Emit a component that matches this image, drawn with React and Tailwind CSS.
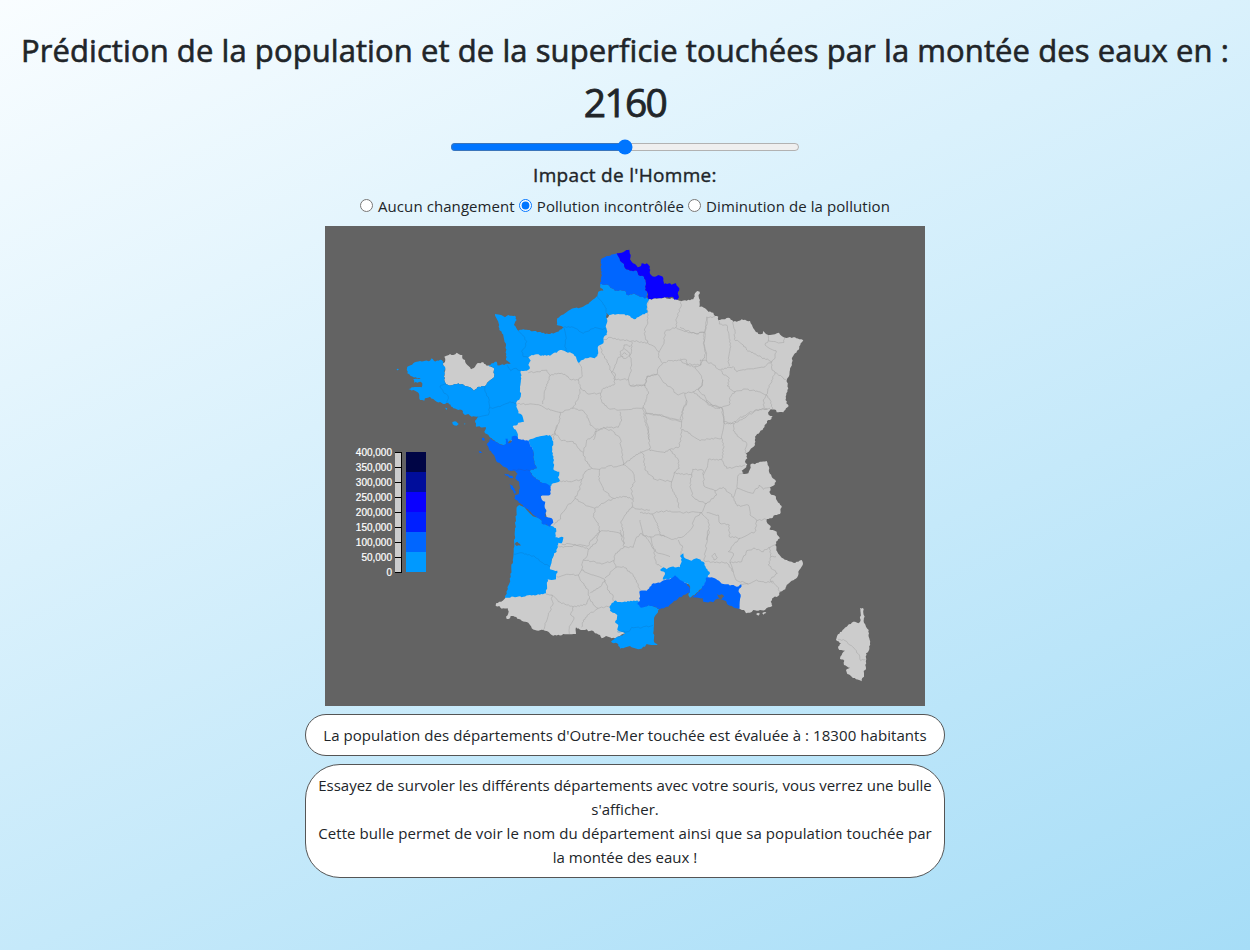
import React from "react";

// Digitised sheets: every trace is recorded in the local frame of its sheet,
// at three units per map pixel.
const SHEETS = {
  A: [390, 300],
  B: [540, 240],
  C: [680, 280],
  D: [470, 420],
  E: [480, 530],
  F: [640, 530],
  G: [640, 400],
  H: [820, 600],
  I: [510, 340],
};

function points(source) {
  let sheet = SHEETS.A;
  const out = [];
  source.trim().split(/\s+/).forEach((token) => {
    if (SHEETS[token]) {
      sheet = SHEETS[token];
      return;
    }
    const [x, y] = token.split(",").map(Number);
    out.push([sheet[0] + x / 3, sheet[1] + y / 3]);
  });
  return out;
}

// Breaks long straight segments into slightly irregular ones. The offset only
// depends on the segment's ends, so that neighbouring areas stay joined.
function roughen(list, closed, amount) {
  const out = [];
  const count = closed ? list.length : list.length - 1;
  for (let i = 0; i < count; i++) {
    const p = list[i];
    const q = list[(i + 1) % list.length];
    out.push(p);
    const length = Math.hypot(q[0] - p[0], q[1] - p[1]);
    const flip = p[0] + p[1] * 0.37 < q[0] + q[1] * 0.37;
    const a = flip ? p : q;
    const b = flip ? q : p;
    const parts = Math.floor(length / 1.5);
    const inner = [];
    for (let k = 1; k < parts; k++) {
      const t = k / parts;
      const noise = Math.sin(a[0] * 12.9 + b[1] * 78.2 + k * 37.7) * 43758.5;
      const offset = (noise - Math.floor(noise) - 0.5) * amount;
      inner.push([
        a[0] + (b[0] - a[0]) * t - ((b[1] - a[1]) / length) * offset,
        a[1] + (b[1] - a[1]) * t + ((b[0] - a[0]) / length) * offset,
      ]);
    }
    out.push(...(flip ? inner : inner.reverse()));
  }
  if (!closed) out.push(list[list.length - 1]);
  return out;
}

function trace(source, closed = true, amount = 1.3) {
  return (
    "M" +
    roughen(points(source), closed, amount)
      .map(([x, y]) => x.toFixed(1) + " " + y.toFixed(1))
      .join("L") +
    (closed ? "Z" : "")
  );
}

const GREY = [
  `B 325,178 345,175 365,175 375,171 385,176 400,176 413,180 425,183 440,182 460,178 465,160 472,153 479,155 476,170 480,180 478,200
   C 60,80 75,85 85,95 100,98 102,105 115,110 115,120 130,118 145,113 160,125 175,123 185,118 200,122 210,123 216,135 220,145 235,162 248,161 250,153 258,162 265,165 285,163 297,158 305,168 315,173 345,172 358,178 370,181 362,190 358,205 345,220 337,232 335,250 330,270 326,290 320,300 325,325 319,340 318,355 319,370 326,378 318,385 310,397 290,397 288,390 272,388 264,398 266,405 278,408 270,420
   G 385,60 370,85 345,110 345,135 330,150 318,160 322,175 315,185 322,193 315,205 305,212 308,221 325,220 330,208 332,192 345,193 355,188 380,183 383,195 388,205 387,215 395,230 408,245 400,257 390,262 390,280 408,290 412,303 425,318 420,342 405,345 395,355 380,357 382,370 392,378 388,388 398,390 410,395 412,405 420,415
   F 408,35 406,45 412,65 425,83 440,90 460,98 475,95 485,90 489,102 482,115 475,125 472,142 455,152 440,165 436,178 420,185 418,195 397,205 392,215 397,228 385,232 375,240 355,242 340,240 335,246 318,250 312,240 300,237 290,225 285,190 200,170 140,160 60,180
   E 440,240 425,300 436,310 420,318 405,325 395,325 378,318 365,325 360,315 345,310 340,303 325,304 320,298 300,299 288,292 288,312 275,313 250,312 245,316 215,315 205,305 190,300 175,302 165,300 155,295 150,285 145,278 125,272 100,258 92,258 90,265 80,267 78,260 85,250 83,235 65,236 58,228 47,228 48,220 68,212 77,200 190,185 195,150 205,115 225,60
   D 245,380 235,300 210,240 230,180 240,100 190,90 120,60 120,10
   A 350,378 350,330 370,250 380,190 430,130
   B 30,320 60,315 85,325 100,340 170,270 230,200`,
  `A 157,190 165,185 163,170 180,162 190,165 200,158 207,163 217,165 217,175 225,180 232,195 243,208 255,200 262,190 280,187 290,197 300,197 312,205 312,232 295,245 285,258 262,262 252,272 245,265 225,258 205,250 185,256 168,252 162,230 165,205`,
  `H 120,24 129,24 130,38 134,50 132,68 138,80 146,90 146,110 150,130 148,148 138,160 139,178 136,195 138,208 131,213 132,225 125,244 108,238 95,230 82,222 78,210 90,203 72,195 73,182 60,177 65,165 75,152 58,150 54,140 64,130 48,120 54,103 65,95 80,80 95,68 105,65 115,70 122,60`,
  `F 348,252 354,248 360,251 355,257`,
  `F 367,249 376,246 379,249 370,254`,
];

const LIGHT = [
  `B 180,133 205,135 215,145 225,152 255,152 262,165 285,162 300,170 318,172 328,178 320,195 322,218 300,228 282,238 270,228 262,225 235,222 205,225 198,218 202,240 197,260 202,275 200,285 192,290 190,310 175,318 175,340 165,355 150,352 135,355 115,368 108,350 95,340 78,335 60,330 50,338 40,340 30,347 5,345
   A 455,168 440,163 425,165 415,172 422,182 415,195 420,205 410,212 392,212 394,235 390,260 392,290 378,310 385,340 396,345 402,365 385,368 382,375 368,378 382,398 384,414 365,420 355,426 345,435 325,430 305,415 290,402 283,395 288,382 258,380 255,362 265,350 245,350 235,342 225,345 215,330 190,325 175,308 165,312 140,305 130,297 120,290 105,295 103,302 90,300 86,280 75,272 55,267 65,262 95,262 97,250 92,245 72,248 70,238 92,237 62,228 52,220 52,200 70,190 90,183 120,182 125,175 132,183 155,180 160,185 158,195 165,200 162,230 168,252 185,256 205,250 225,258 245,265 252,272 262,262 285,258 295,245 312,232 312,205 295,197 305,190 320,185 322,196 362,190 348,180 347,130 335,95 328,90 325,65 315,42 335,46 345,52 355,45 375,47 380,60 372,75 385,92 400,88 475,102 495,98 515,88
   B 70,262 50,255 52,235 65,225 100,205 125,202 145,192 165,175 172,168 175,155 190,152 180,142`,
  `D 175,62 205,50 240,45 250,65 246,95 252,120 250,148 268,155 264,172 270,183 250,190 240,200 215,188 185,165 180,152 200,145 193,130 190,95`,
  `D 140,262 148,255 160,260 185,285 215,300 215,310 245,318 258,325 256,352 280,352
   E 250,25 245,40 235,38 230,65 222,70 215,95 210,118 232,122 228,148 215,150 203,148 198,190 170,195 145,196 130,200 100,200 75,203 90,150 98,90 103,50 104,15
   D 135,330`,
  `F 60,120 70,112 80,118 95,110 120,112 125,85 120,78 130,70 135,85 155,92 170,85 190,95 198,115 210,130 200,145 192,165 175,185 150,203 145,195 150,180 148,165 105,145 68,148 75,128`,
  `E 390,228 403,213 430,216 475,212 480,225 492,232 510,222 538,238 525,258 522,275 521,300 522,335 533,345 500,342 495,350 475,358 450,348 430,355 420,356 415,343 393,335 405,325 436,311 412,300 415,285 406,278 412,255 390,242`,
  `A 187,366 195,364 206,372 200,377 188,373`,
  `A 165,323 172,325 170,330`,
  `A 20,207 25,206 26,210 21,211`,
  `A 222,371 226,370 225,374`,
];

const MEDIUM = [
  `D 50,75 62,55 72,62 85,70 100,76 108,72 106,56 113,56 114,70 125,65 125,50 135,47 150,58 175,62 190,95 193,130 200,145 180,152 185,165 215,188 228,190 242,200 240,225 212,228 216,240 226,245 224,262 229,270 225,290 245,295 250,308 240,320 215,310 212,298 185,280 165,262 150,250 133,235 135,225 146,222 150,205 148,188 135,175 143,162 135,152 120,152 95,135 80,125 75,112 65,98`,
  `D 103,161 115,163 130,172 128,175 108,167`,
  `D 118,191 128,197 138,215 135,222 122,205`,
  `D 35,54 42,53 44,62 37,61`,
  `D 26,94 32,94 36,99 29,99`,
  `B 182,60 200,48 230,40 240,62 252,72 255,85 270,92 290,92 295,105 312,110 318,130 315,150 322,160 318,175 300,170 285,162 262,165 255,152 225,152 215,145 205,135 180,133 184,110`,
  `F 0,183 20,182 40,160 60,158 75,150 90,148 105,136 125,152 148,170 150,188 130,195 100,215 85,230 60,238 45,230 25,226 10,232
   E 480,232 472,222 480,210 478,185`,
  `F 200,142 215,142 232,150 250,162 275,165 290,170 303,163 305,168 296,180 302,200 298,237 280,232 265,225 258,213 230,207 220,217 190,215 188,205 155,203 178,185 192,165`,
];

const DARK = [
  `B 230,40 245,38 255,33 268,29 272,45 270,58 275,65 285,72 293,82 303,78 305,70 315,73 320,70 330,80 329,95 333,105 345,110 355,105 368,110 370,122 372,132 390,130 395,134 408,130 414,140 418,145 413,160 417,172 412,179 403,179 400,172 372,172 345,175 325,178 323,160 315,150 318,130 312,110 295,105 290,92 270,92 255,85 252,72 240,62`,
];

const WATER = [
  `E 104,42 112,35 122,47 110,48`,
  `F 230,193 238,196 245,193 252,200 245,207 236,203`,
];

const LIMITS = [
  // Nord and Île-de-France
  `B 325,178 321,195 322,220 323,245 313,270 316,290 323,308`,
  `B 424,183 420,205 410,235 408,262`,
  `B 408,262 385,270 375,275 372,305 358,335 340,318 323,308`,
  `B 190,298 215,293 245,300 275,303 323,308`,
  `B 408,262 435,275 465,280 492,278`,
  `B 500,230 502,250 492,278 492,310 498,340 488,362 482,375`,
  `B 358,335 355,352 368,370 355,385 350,403`,
  `B 368,370 390,362 415,360 440,372 482,375`,
  `B 180,318 190,345 205,370 215,398 225,375 235,352 250,350`,
  `B 275,305 275,330 270,345 275,375 270,400 265,418`,
  `B 240,335 252,325 262,332 270,340 262,352 250,355 240,345 240,335`,
  `B 245,345 253,338 262,345`,
  `B 250,325 252,315 272,318`,
  `B 215,398 225,418 265,418 268,435 285,438 315,437 320,410 350,403`,
  // North-east
  `C 0,142 20,152 45,160 75,158`,
  `C 75,158 78,135 82,112 105,110`,
  `C 75,158 70,190 78,215 80,243`,
  `C 115,120 118,132 140,135 145,155 150,180 150,210 145,235 148,258`,
  `C 158,125 165,150 163,178 190,195 200,210 235,228 275,245`,
  `C 80,243 100,255 122,270 148,262 160,260 170,275 195,270 225,265 250,262 275,245`,
  `C 265,165 265,182 255,195 272,207 288,212 285,235 275,245`,
  `C 265,182 290,187 312,187 315,173`,
  `C 275,245 275,265 285,278 305,290 320,302`,
  `C 285,278 275,300 268,322 258,345`,
  `C 122,270 132,285 148,295 142,318 165,335`,
  `C 165,335 195,327 235,335 258,345 270,360 278,388`,
  `C 165,335 150,352 148,375 125,383`,
  `C 258,345 250,360 252,383 262,388`,
  `C 125,383 130,405 132,430 155,430 190,408 225,390 262,388`,
  `C 80,243 60,240 62,255 45,260 65,290 68,315 55,328 75,350 85,375 105,385 125,383`,
  `C 0,237 20,240 20,255 45,260`,
  // Centre
  `I 55,98 85,95 110,90 120,107 145,100 165,103 180,118 205,120 217,108 215,85 205,68`,
  `I 120,107 105,150 98,192`,
  `I 18,190 55,193 90,196 120,210 150,217 188,205 205,175 212,145 205,120`,
  `I 212,145 235,162 272,160 280,145 312,135 315,100`,
  `I 315,100 308,95`,
  `I 272,160 275,185 295,205 330,210 365,208 400,203 410,175 415,155 405,137`,
  `I 360,137 405,137 412,108 442,103`,
  `I 442,103 465,130 485,145 500,163 525,160 550,155 570,145 578,120`,
  `I 400,203 410,222 450,225 480,235 512,240 515,215 530,190 525,160`,
  `I 550,155 575,175 595,190 630,207`,
  `I 188,205 220,212 235,235 240,255 258,268 300,262 325,262 335,240 330,215`,
  `I 150,217 148,245 138,262 130,300`,
  `I 258,268 250,300`,
  `I 400,203 403,235 412,265 418,300`,
  // West and Limousin
  `D 240,50 255,40 262,15`,
  `D 255,40 275,62 310,65 325,85 340,98`,
  `D 340,98 350,60 368,50 375,35 400,22 430,35 450,55 455,95 460,135`,
  `D 340,98 345,120 365,145 345,155 335,178`,
  `D 270,183 300,185 335,178 330,205 315,235 290,260 275,280 272,297 250,315`,
  `D 365,145 390,148 415,138 440,140 465,135`,
  `D 390,148 385,170 400,210 430,235`,
  `D 315,235 345,255 375,265 400,250 430,235 465,230 488,238`,
  `D 465,135 490,160 495,185 482,205 490,235 485,262 510,268 540,270`,
  `D 460,135 490,110 520,95 540,85`,
  `D 375,265 370,290 385,310 390,335 360,365 355,378 325,375 280,382 260,378`,
  `D 390,335 415,332 450,340 460,350`,
  `D 485,262 465,285 452,305 460,340 462,372`,
  // South-west
  `E 245,42 285,43 310,50 325,58 320,80 310,90 305,120 295,135 265,133 230,140`,
  `E 325,58 350,35 358,0`,
  `E 420,0 432,50 405,75 402,92`,
  `E 432,50 460,52 468,25 485,10 500,25 515,50 535,70 570,80`,
  `E 310,90 345,95 365,102 402,92 408,112 375,145`,
  `E 305,120 340,135 375,150 362,170 330,190`,
  `E 295,135 305,155 325,180 328,205 320,222 280,230 260,225 235,215 215,195 198,192`,
  `E 215,195 218,225 205,250 195,280 190,300`,
  `E 280,230 272,255 282,262 268,295 268,312`,
  `E 328,205 345,228 355,235 330,250 310,270 305,292`,
  `E 355,235 385,230 395,225`,
  `E 375,150 382,175 400,200 400,213`,
  `E 408,112 430,110 455,130 475,165 480,183`,
  // Massif Central, Rhône
  `G 15,40 60,45 100,60 125,65`,
  `G 125,65 130,30 140,0`,
  `G 125,65 122,85 150,100 180,122 215,115 245,115`,
  `G 15,40 25,90 30,152 75,158 90,148`,
  `G 125,90 118,140 90,148 115,180 118,205 102,218`,
  `G 200,0 215,15 245,22 252,65 245,115`,
  `G 252,65 282,72 310,55 350,30 390,25`,
  `G 282,72 280,92 300,115 320,130 315,158 318,160`,
  `G 245,115 252,140 245,180 260,205 295,200 315,195`,
  `G 245,180 205,178 200,205 190,225 192,258 225,272 250,262`,
  `G 0,155 10,162 15,210 45,238 95,245 102,218 155,225 158,208 188,210 190,225`,
  `G 95,245 95,265 112,300 118,325`,
  `G 155,225 150,250 158,290 175,303 200,310 230,285 225,272`,
  `G 250,262 280,292 292,265 295,225 310,218`,
  `G 292,265 320,275 340,280 358,255 370,268 390,262`,
  `G 280,292 292,318 325,315 330,345 350,362 378,358`,
  `G 0,338 35,342 50,335 90,333 125,338 160,335 185,338 200,310`,
  `G 35,342 52,370 62,405 100,418 125,412 155,385 165,352 185,338`,
  `G 185,338 205,360 208,395 200,420`,
  `G 200,338 235,345 240,370 268,375 268,410 300,415 345,395 350,362`,
  // South-east
  `F 30,20 40,50 48,100 65,110`,
  `F 0,-30 10,15 30,20 60,15 75,20`,
  `F 115,30 128,52 122,75`,
  `F 205,0 200,40 192,92`,
  `F 215,78 225,70 232,82 222,90 215,78`,
  `F 192,92 225,98 260,98 280,125 288,150 325,162`,
  `F 300,25 280,45 265,65 280,70 270,98 280,125`,
  `F 270,98 305,95 320,62 345,55 365,65 390,52 408,45`,
  `F 390,52 392,80 408,80`,
  `F 392,80 385,105 412,130 390,150 398,160`,
  `F 303,163 325,162 350,150 375,158 398,153 412,170 420,188`,
  `H 54,118 75,122 90,135 105,148 118,165 122,182 137,178`,
];

const LIMITS_ON_LIGHT = [
  `B 172,168 185,185 198,205 198,218`,
  `B 70,262 100,262 130,280 165,262 198,268`,
  `B 70,262 78,290 75,315 80,335`,
  `A 385,92 398,105 410,125 405,142 395,155 400,170 415,172`,
  `A 350,195 362,212 375,205 392,212`,
  `A 168,252 150,258 160,275 175,290 170,308`,
  `A 285,258 285,275 298,300 298,325`,
  `A 260,350 295,345 298,325 330,320 360,305 378,310`,
  `E 100,72 125,68 165,80 190,100 210,110`,
  `E 412,305 445,305 455,292 485,293 520,285`,
  `B 318,172 300,170 285,162`,
];

const SCALE = [
  ["400,000", "bg-[#000545]"],
  ["350,000", "bg-[#000d9b]"],
  ["300,000", "bg-[#0a00ff]"],
  ["250,000", "bg-[#001fff]"],
  ["200,000", "bg-[#0066ff]"],
  ["150,000", "bg-[#0099ff]"],
  ["100,000"],
  ["50,000"],
  ["0"],
];

function Areas({ list, fill }) {
  return <path d={list.map((s) => trace(s)).join("")} fill={fill} />;
}

function FranceMap() {
  return (
    <svg className="block h-[480px] w-[600px]" viewBox="325 226 600 480" role="img">
      <Areas list={GREY} fill="#cccccc" />
      <path
        d={LIMITS.map((s) => trace(s, false, 1.6)).join("")}
        fill="none"
        stroke="#a3a3a3"
        strokeWidth="0.5"
      />
      <Areas list={LIGHT} fill="#0099ff" />
      <path
        d={LIMITS_ON_LIGHT.map((s) => trace(s, false, 1.3)).join("")}
        fill="none"
        stroke="#0a80d4"
        strokeWidth="0.5"
      />
      <Areas list={MEDIUM} fill="#0066ff" />
      <path
        d={trace("D 120,152 150,148 180,152", false)}
        fill="none"
        stroke="#1a5bd0"
        strokeWidth="0.5"
      />
      <Areas list={DARK} fill="#0a00ff" />
      <Areas list={WATER} fill="#636363" />
    </svg>
  );
}

function Legend() {
  return (
    <div className="absolute left-[27px] top-[219px] flex font-['Liberation_Sans',Arial,sans-serif] text-[10px] text-white">
      <ul className="w-10 text-right">
        {SCALE.map(([label]) => (
          <li key={label} className="h-[15px] leading-[15px] [-webkit-text-stroke:0.2px_white]">
            {label}
          </li>
        ))}
      </ul>
      <div className="ml-[3px] mt-[7px] h-[121px] w-[7px] border-y border-r border-black bg-[#cccccc]">
        {SCALE.slice(1).map(([label]) => (
          <div key={label} className="h-[15px] border-b border-black last:border-b-0" />
        ))}
      </div>
      <div className="ml-1 mt-[7px] w-5">
        {SCALE.slice(0, 6).map(([label, colour]) => (
          <div key={label} className={`h-5 ${colour}`} />
        ))}
      </div>
    </div>
  );
}

function Choice({ label, checked }) {
  return (
    <label className="flex items-center">
      <input
        type="radio"
        name="impact"
        defaultChecked={checked}
        className="m-0 mb-px mr-[5px] h-[13px] w-[13px]"
      />
      {label}
    </label>
  );
}

export default function App() {
  return (
    <main className="flex h-[950px] w-[1250px] flex-col items-center overflow-hidden bg-[linear-gradient(155deg,#f9fdff_0%,#a6ddf7_100%)] pt-[31px] font-['Open_Sans','Noto_Sans',sans-serif] text-base text-[#212529]">
      <h2 className="h-[38px] whitespace-nowrap text-[31px] font-medium leading-[38px] tracking-[0.08px] [-webkit-text-stroke:0.6px_#212529]">
        <span>Prédiction de la population et de la superficie touchées par la montée des eaux en :</span>
      </h2>
      <h1 className="mt-[9px] h-12 text-[39px] font-medium leading-[48px] tracking-[-1.7px] [-webkit-text-stroke:0.8px_#212529]">
        <span>2160</span>
      </h1>
      <input type="range" min="2020" max="2300" defaultValue="2160" className="m-0 mt-[13px] h-4 w-[350px]" />
      <h3 className="mt-[8px] h-6 text-[19px] font-medium leading-6 tracking-[0.3px] [-webkit-text-stroke:0.4px_#212529]">
        <span>Impact de l'Homme:</span>
      </h3>
      <div className="mt-[7px] flex h-6 items-center gap-1 whitespace-nowrap text-[15px] leading-6 tracking-[0.08px]">
        <Choice label="Aucun changement" />
        <Choice label="Pollution incontrôlée" checked />
        <Choice label="Diminution de la pollution" />
      </div>
      <section className="relative mt-2 h-[480px] w-[600px] shrink-0 bg-[#636363]">
        <FranceMap />
        <Legend />
      </section>
      <p className="mt-2 h-[42px] w-[640px] shrink-0 whitespace-nowrap rounded-[35px] border border-[#555555] bg-white py-2 text-center text-[15px] leading-6 tracking-[0.07px]">
        <span>La population des départements d'Outre-Mer touchée est évaluée à : 18300 habitants</span>
      </p>
      <p className="mt-2 h-[114px] w-[640px] shrink-0 whitespace-nowrap rounded-[35px] border border-[#555555] bg-white py-2 text-center text-[15px] leading-6">
        Essayez de survoler les différents départements avec votre souris, vous verrez une bulle
        <br />
        s'afficher.
        <br />
        <span className="tracking-[0.08px]">
          Cette bulle permet de voir le nom du département ainsi que sa population touchée par
        </span>
        <br />
        la montée des eaux !
      </p>
    </main>
  );
}
